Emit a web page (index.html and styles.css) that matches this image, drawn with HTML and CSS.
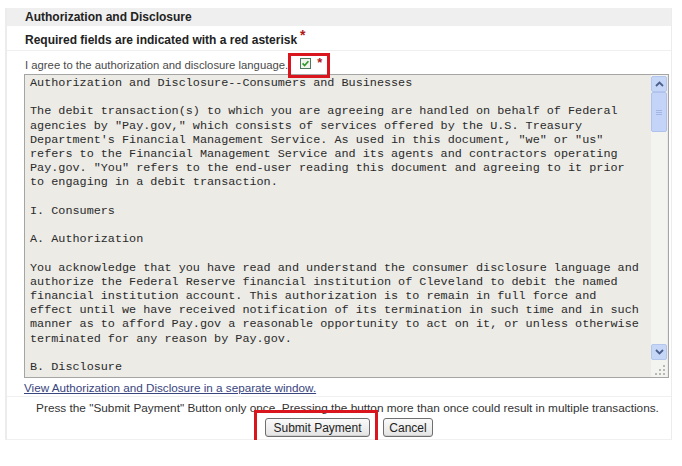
FILE: index.html
```html
<!DOCTYPE html>
<html>
<head>
<meta charset="utf-8">
<link rel="stylesheet" href="styles.css">
</head>
<body>
<div class="panel">
  <div class="hdr">Authorization and Disclosure</div>
  <div class="req">Required fields are indicated with a red asterisk<span class="ast">*</span></div>
  <div class="agree">
    <span class="agree-text">I agree to the authorization and disclosure language.</span>
    <span class="mark">
      <svg class="cb" width="11" height="11" viewBox="0 0 11 11"><rect x="0.5" y="0.5" width="10" height="10" fill="#f2f5ee" stroke="#4b7a5c"/><path d="M2.6 5.4 L4.6 7.5 L8.4 3.3" fill="none" stroke="#2f9a2c" stroke-width="1.7"/></svg><span class="ast small">*</span>
    </span>
  </div>
  <div class="tbox">
    <div class="ttext">Authorization and Disclosure--Consumers and Businesses

The debit transaction(s) to which you are agreeing are handled on behalf of Federal
agencies by "Pay.gov," which consists of services offered by the U.S. Treasury
Department's Financial Management Service. As used in this document, "we" or "us"
refers to the Financial Management Service and its agents and contractors operating
Pay.gov. "You" refers to the end-user reading this document and agreeing to it prior
to engaging in a debit transaction.

I. Consumers

A. Authorization

You acknowledge that you have read and understand the consumer disclosure language and
authorize the Federal Reserve financial institution of Cleveland to debit the named
financial institution account. This authorization is to remain in full force and
effect until we have received notification of its termination in such time and in such
manner as to afford Pay.gov a reasonable opportunity to act on it, or unless otherwise
terminated for any reason by Pay.gov.

B. Disclosure</div>
    <div class="sbar">
      <div class="sbtn"><svg width="9" height="6" viewBox="0 0 9 6"><path d="M1 5 L4.5 1.5 L8 5" fill="none" stroke="#4b5f8c" stroke-width="1.8"/></svg></div>
      <div class="thumb"><span></span><span></span><span></span></div>
      <div class="track"></div>
      <div class="sbtn"><svg width="9" height="6" viewBox="0 0 9 6"><path d="M1 1 L4.5 4.5 L8 1" fill="none" stroke="#4b5f8c" stroke-width="1.8"/></svg></div>
      <div class="grip">
        <svg width="12" height="12" viewBox="0 0 12 12"><g fill="#b8b8b8"><rect x="9" y="1" width="2" height="2"/><rect x="9" y="5" width="2" height="2"/><rect x="5" y="5" width="2" height="2"/><rect x="9" y="9" width="2" height="2"/><rect x="5" y="9" width="2" height="2"/><rect x="1" y="9" width="2" height="2"/></g></svg>
      </div>
    </div>
  </div>
  <div class="linkrow"><a href="#" class="lnk">View Authorization and Disclosure in a separate window.</a></div>
  <div class="foot">
    <div class="press">Press the "Submit Payment" Button only once. Pressing the button more than once could result in multiple transactions.</div>
    <div class="btns">
      <span class="hl"><button class="btn submit">Submit Payment</button></span>
      <button class="btn cancel">Cancel</button>
    </div>
  </div>
</div>
</body>
</html>
```

FILE: styles.css
```css
html, body {
  margin: 0;
  padding: 0;
  background: #ffffff;
}
body {
  font-family: "Liberation Sans", Arial, sans-serif;
  color: #2b2b2b;
}
.panel {
  margin: 8px 0 0 5px;
  width: 667px;
  height: 432px;
  border-left: 2px solid #ececec;
  border-right: 1px solid #ececec;
  border-bottom: 1px solid #f0f0f0;
  box-sizing: border-box;
  display: flex;
  flex-direction: column;
}
.hdr {
  background: #efefef;
  height: 18px;
  line-height: 18px;
  padding-left: 18px;
  font-weight: bold;
  font-size: 12px;
  color: #222;
}
.req {
  height: 24px;
  line-height: 26px;
  padding-left: 18px;
  font-weight: bold;
  font-size: 12px;
  color: #222;
  border-bottom: 1px solid #efefef;
}
.ast {
  color: #b01818;
  font-size: 14px;
  font-weight: bold;
  position: relative;
  top: -4px;
  margin-left: 3px;
}
.agree {
  height: 23px;
  display: flex;
  align-items: center;
  padding-left: 18px;
  font-size: 11.3px;
  color: #4a4a4a;
}
.agree-text {
  padding-top: 5px;
}
.mark {
  position: relative;
  display: inline-flex;
  align-items: flex-start;
  width: 23px;
  height: 11px;
  margin-left: 12px;
  margin-top: 2px;
}
.mark::after {
  content: "";
  position: absolute;
  left: -12px;
  right: -7px;
  top: -5px;
  bottom: -9px;
  border: 3px solid #d9151e;
}
.cb {
  display: block;
  flex: none;
}
.ast.small {
  font-size: 13px;
  line-height: 11px;
  top: -1px;
  margin-left: 6px;
}
.tbox {
  margin-left: 17px;
  width: 645px;
  height: 304px;
  box-sizing: border-box;
  border: 1px solid #a5a5a5;
  background: #ecebe6;
  display: flex;
  overflow: hidden;
}
.ttext {
  flex: 1;
  white-space: pre;
  overflow: hidden;
  font-family: "Liberation Mono", "Courier New", monospace;
  font-size: 11.8px;
  line-height: 14.2px;
  color: #2a2a2a;
  padding: 1px 0 0 5px;
}
.sbar {
  width: 16px;
  margin-right: 1px;
  display: flex;
  flex-direction: column;
  background: #f3f3ef;
}
.sbtn {
  height: 16px;
  margin-top: 1px;
  background: #c6d6f7;
  border: 1px solid #b4c6ee;
  border-radius: 2px;
  box-sizing: border-box;
  display: flex;
  align-items: center;
  justify-content: center;
}
.thumb {
  height: 40px;
  background: #c4d4f8;
  border: 1px solid #b0c2ec;
  border-radius: 2px;
  box-sizing: border-box;
  display: flex;
  flex-direction: column;
  align-items: center;
  justify-content: center;
  gap: 1px;
}
.thumb span {
  width: 6px;
  height: 1px;
  background: #a3b6e2;
}
.track {
  flex: 1;
}
.grip {
  height: 16px;
  display: flex;
  justify-content: flex-end;
  align-items: flex-end;
  padding: 0 1px 1px 0;
}
.linkrow {
  height: 18px;
  line-height: 18px;
  padding-left: 17px;
  border-bottom: 1px solid #f0f0f0;
}
.lnk {
  font-size: 11.7px;
  color: #39457e;
  text-decoration: underline;
}
.foot {
  display: flex;
  flex-direction: column;
  align-items: center;
  padding-top: 4px;
}
.press {
  font-size: 11.8px;
  color: #333;
  line-height: 14px;
  padding-left: 17px;
}
.btns {
  display: flex;
  gap: 13px;
  margin-top: 3px;
  padding-left: 20px;
}
.hl {
  position: relative;
  display: inline-block;
}
.hl::after {
  content: "";
  position: absolute;
  left: -11px;
  right: -8px;
  top: -8px;
  bottom: -11px;
  border: 3px solid #d9151e;
}
.btn {
  display: block;
  font-family: "Liberation Sans", Arial, sans-serif;
  font-size: 12px;
  color: #222;
  height: 19px;
  padding: 0 4px;
  background: linear-gradient(#fafafa, #e4e4e4);
  border: 1px solid #6f6f6f;
  border-radius: 3px;
  box-shadow: inset 0 -1px 0 #d0d0d0;
}
.submit {
  width: 105px;
}
.cancel {
  width: 50px;
}
```
